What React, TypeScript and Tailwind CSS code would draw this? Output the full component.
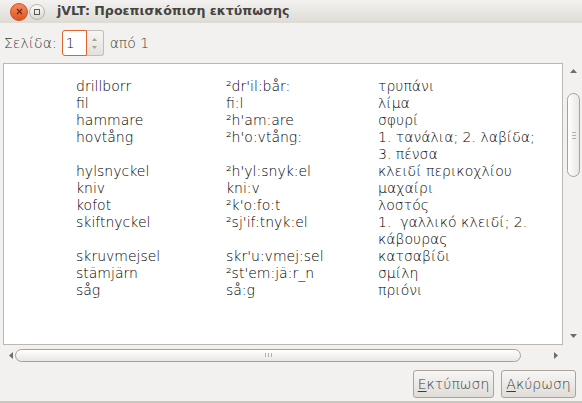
import React from "react";

const rows: { w: string; p: string; t: string[] }[] = [
  { w: "drillborr", p: "²dr'il:bår:", t: ["τρυπάνι"] },
  { w: "fil", p: "fi:l", t: ["λίμα"] },
  { w: "hammare", p: "²h'am:are", t: ["σφυρί"] },
  { w: "hovtång", p: "²h'o:vtång:", t: ["1. τανάλια; 2. λαβίδα;", "3. πένσα"] },
  { w: "hylsnyckel", p: "²h'yl:snyk:el", t: ["κλειδί περικοχλίου"] },
  { w: "kniv", p: "kni:v", t: ["μαχαίρι"] },
  { w: "kofot", p: "²k'o:fo:t", t: ["λοστός"] },
  { w: "skiftnyckel", p: "²sj'if:tnyk:el", t: ["1.\u00a0 γαλλικό κλειδί; 2.", "κάβουρας"] },
  { w: "skruvmejsel", p: "skr'u:vmej:sel", t: ["κατσαβίδι"] },
  { w: "stämjärn", p: "²st'em:jä:r_n", t: ["σμίλη"] },
  { w: "såg", p: "så:g", t: ["πριόνι"] },
];

function Tri({ dir }: { dir: "up" | "down" | "left" | "right" }) {
  const pts =
    dir === "up"
      ? "0,4 3.5,0 7,4"
      : dir === "down"
      ? "0,0 7,0 3.5,4"
      : dir === "left"
      ? "4,0 4,7 0,3.5"
      : "0,0 0,7 4,3.5";
  const w = dir === "up" || dir === "down" ? 7 : 4;
  const h = dir === "up" || dir === "down" ? 4 : 7;
  return (
    <svg width={w} height={h} viewBox={`0 0 ${w} ${h}`}>
      <polygon points={pts} fill="#6f6d69" />
    </svg>
  );
}

export default function App() {
  const ui = { fontFamily: '"DejaVu Sans", sans-serif' };
  return (
    <div
      className="w-[582px] h-[403px] bg-[#f2f1f0] flex flex-col overflow-hidden text-[#3c3c3c] border-b-2 border-[#cdc6bc]"
      style={ui}
    >
      {/* title bar */}
      <div className="h-[23px] flex items-center bg-gradient-to-b from-[#f3f2f0] to-[#dedbd5] shrink-0">
        <div className="ml-[10px] w-[18px] h-[18px] rounded-full bg-gradient-to-b from-[#f58a5c] to-[#e0531f] border border-[#c9521f] flex items-center justify-center">
          <svg width="7" height="7" viewBox="0 0 7 7">
            <path d="M1 1L6 6M6 1L1 6" stroke="#6b2a12" strokeWidth="1.2" />
          </svg>
        </div>
        <div className="ml-[1px] w-[16px] h-[16px] rounded-full bg-gradient-to-b from-[#fbfbfa] to-[#dcd9d3] border border-[#b9b4ac] flex items-center justify-center">
          <div className="w-[6px] h-[6px] border border-[#5b5955]" />
        </div>
        <div className="ml-[12px] text-[12.6px] font-bold text-[#45443f] leading-none">
          jVLT: Προεπισκόπιση εκτύπωσης
        </div>
      </div>

      {/* toolbar */}
      <div className="h-[40px] flex items-center pl-[4px] shrink-0 text-[14px] font-extralight">
        <span>Σελίδα:</span>
        <div className="ml-[5px] flex h-[26px]">
          <div className="w-[25px] h-full border border-[#e0622d] rounded-l-[3px] bg-white flex items-center pl-[3px] text-[#222]">
            1
          </div>
          <div className="w-[17px] h-full border border-l-0 border-[#c2bdb5] rounded-r-[3px] bg-gradient-to-b from-[#f7f6f5] to-[#e4e1dc] flex flex-col items-center justify-center gap-[5px]">
            <svg width="5" height="3" viewBox="0 0 5 3"><polygon points="0,3 2.5,0 5,3" fill="#a5a19b" /></svg>
            <svg width="5" height="3" viewBox="0 0 5 3"><polygon points="0,0 5,0 2.5,3" fill="#a5a19b" /></svg>
          </div>
        </div>
        <span className="ml-[6px]">από 1</span>
      </div>

      {/* content + scrollbars */}
      <div className="grid grid-cols-[560px_19px] grid-rows-[282px_20px] ml-[3px] shrink-0">
        <div className="bg-white border border-[#bcb7af] pt-[14px] pl-[72px] text-[14px] leading-[17px] text-black font-extralight overflow-hidden">
          <div className="grid grid-cols-[150px_152px_1fr]">
            {rows.map((r) => (
              <React.Fragment key={r.w}>
                <div>{r.w}</div>
                <div>{r.p}</div>
                <div>
                  {r.t.map((l) => (
                    <div key={l}>{l}</div>
                  ))}
                </div>
              </React.Fragment>
            ))}
          </div>
        </div>
        {/* vertical scrollbar */}
        <div className="flex flex-col items-center pl-[2px]">
          <div className="mt-[5px] h-[6px] flex items-center">
            <Tri dir="up" />
          </div>
          <div className="mt-[19px] w-[13px] h-[84px] rounded-full border border-[#a6a29a] bg-gradient-to-r from-[#ffffff] to-[#e9e7e3] flex flex-col items-center justify-center gap-[2px]">
            <div className="w-[4px] h-px bg-[#b4b0a9]" />
            <div className="w-[4px] h-px bg-[#b4b0a9]" />
            <div className="w-[4px] h-px bg-[#b4b0a9]" />
          </div>
          <div className="mt-auto mb-[6px] h-[6px] flex items-center">
            <Tri dir="down" />
          </div>
        </div>
        {/* horizontal scrollbar */}
        <div className="flex items-center">
          <div className="ml-[5px] w-[6px] flex justify-center">
            <Tri dir="left" />
          </div>
          <div className="ml-[1px] w-[506px] h-[13px] rounded-full border border-[#a6a29a] bg-gradient-to-b from-[#ffffff] to-[#e9e7e3] flex items-center justify-center gap-[2px]">
            <div className="w-px h-[4px] bg-[#b4b0a9]" />
            <div className="w-px h-[4px] bg-[#b4b0a9]" />
            <div className="w-px h-[4px] bg-[#b4b0a9]" />
          </div>
          <div className="ml-auto mr-[4px] w-[6px] flex justify-center">
            <Tri dir="right" />
          </div>
        </div>
        <div />
      </div>

      {/* buttons */}
      <div className="flex justify-end gap-[7px] pr-[6px] pt-[5px] text-[14px] font-extralight">
        <button className="w-[81px] h-[28px] rounded-[3px] border border-[#a9a49d] bg-gradient-to-b from-[#f7f6f5] to-[#e0ddd8] text-[#3c3c3c]">
          <span className="underline underline-offset-2">Ε</span>κτύπωση
        </button>
        <button className="w-[75px] h-[28px] rounded-[3px] border border-[#a9a49d] bg-gradient-to-b from-[#f7f6f5] to-[#e0ddd8] text-[#3c3c3c]">
          <span className="underline underline-offset-2">Α</span>κύρωση
        </button>
      </div>
    </div>
  );
}
